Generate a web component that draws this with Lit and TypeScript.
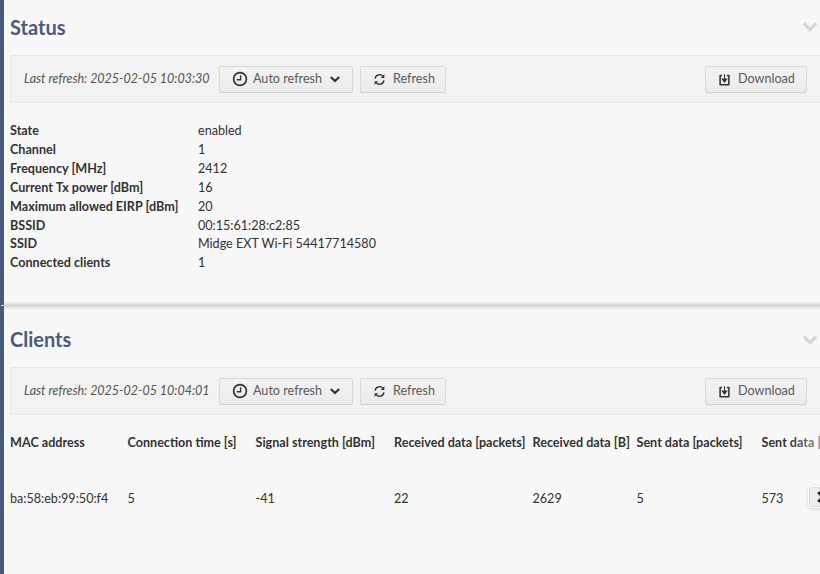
import { LitElement, html, css, svg } from "lit";
import { customElement } from "lit/decorators.js";

const clock = html`<svg class="ic" viewBox="0 0 16 16" width="16" height="16"><circle cx="8" cy="8" r="6.4" fill="none" stroke="#333" stroke-width="1.7"/><path d="M8.6 4.2V8.8H4.8" fill="none" stroke="#333" stroke-width="1.4"/></svg>`;
const refresh = html`<svg class="ic" viewBox="0 0 16 16" width="13" height="13"><path d="M2.6 7A5.5 5.5 0 0 1 12.3 4.2M13.4 9A5.5 5.5 0 0 1 3.7 11.8" fill="none" stroke="#333" stroke-width="1.7"/><path d="M14 1.6V6H9.6ZM2 14.4V10H6.4Z" fill="#333"/></svg>`;
const down = html`<svg class="ic" viewBox="0 0 16 16" width="13" height="13"><path d="M5 3H2.6V14.4H13.4V3H11" fill="none" stroke="#333" stroke-width="1.9" stroke-linejoin="round"/><path d="M8 1.5V8M5.2 7.4H10.8L8 11.2Z" fill="#333" stroke="#333" stroke-width="1.3"/></svg>`;
const chev = svg`<path d="M2 3.5L7 8.5L12 3.5" fill="none" stroke="currentColor" stroke-width="2.6"/>`;

const status = [
  ["State", "enabled"], ["Channel", "1"], ["Frequency [MHz]", "2412"],
  ["Current Tx power [dBm]", "16"], ["Maximum allowed EIRP [dBm]", "20"],
  ["BSSID", "00:15:61:28:c2:85"], ["SSID", "Midge EXT Wi-Fi 54417714580"],
  ["Connected clients", "1"],
];
const heads = ["MAC address", "Connection time [s]", "Signal strength [dBm]", "Received data [packets]", "Received data [B]", "Sent data [packets]", "Sent data [B]"];
const vals = ["ba:58:eb:99:50:f4", "5", "-41", "22", "2629", "5", "573"];

@customElement("app-root")
export class AppRoot extends LitElement {
  static styles = css`
    :host { display: block; width: 820px; height: 574px; overflow: hidden; background: #f8f8f8; font-family: Lato, sans-serif; font-size: 12.6px; color: #333; }
    .page { box-sizing: border-box; height: 574px; border-left: 4px solid #4a5b7c; display: flex; flex-direction: column; }
    .section { padding-left: 6px; display: flex; flex-direction: column; }
    .first { height: 302px; flex: none; }
    .head { box-sizing: border-box; height: 55px; padding-bottom: 2px; display: flex; align-items: center; justify-content: space-between; }
    .second .head { height: 57px; padding-bottom: 0; padding-top: 1px; }
    h2 { margin: 0; font-size: 20px; line-height: 24px; font-weight: 700; color: #4a5b7c; }
    .chev { width: 18px; height: 15px; color: #d6d6d6; margin-right: 1px; }
    .bar { box-sizing: border-box; height: 48px; background: #f2f2f2; border: 1px solid #e8e8e8; border-right: 0; border-radius: 2px 0 0 2px; display: flex; align-items: center; padding: 0 13px 0 13px; }
    .time { font-style: italic; font-size: 12.5px; color: #555; width: 195px; white-space: nowrap; padding-bottom: 1px; }
    button { box-sizing: border-box; height: 27px; font: 12.6px Lato, sans-serif; color: #5a5a5a; background: linear-gradient(#f3f3f3, #ebebeb); border: 1px solid #dadada; border-bottom-color: #cfcfcf; border-radius: 2px; display: flex; align-items: center; padding: 0 0 0 12px; }
    button span { padding-bottom: 2px; }
    .auto { width: 134px; gap: 5px; }
    .ref { width: 86px; margin-left: 7px; gap: 7px; }
    .dl { width: 102px; margin-left: auto; gap: 7px; }
    .small { width: 12px; height: 10px; color: #333; margin-left: 2px; }
    .ic { flex: none; }
    .kv { display: grid; grid-template-columns: 188px 1fr; grid-auto-rows: 18.9px; margin-top: 18.05px; line-height: 19px; }
    .kv b, .tbl b { font-weight: 700; color: #333; white-space: nowrap; }
    .sep { position: relative; height: 8px; flex: none; background: linear-gradient(#f2f2f2, #dedede 30%, #d0d0d0 45%, #e6e6e6 70%, #f8f8f8); }
    .sep::before { content: ""; position: absolute; left: -3px; top: 3px; width: 3px; height: 1px; background: #c8d0dc; }
    .wrap { position: relative; }
    .tbl { display: grid; grid-template-columns: 117.5px 128px 138.5px 138.5px 104px 125px 80px; grid-template-rows: 19px 19px; row-gap: 37px; margin-top: 18px; line-height: 19px; white-space: nowrap; overflow: hidden; width: 810px; }
    .fade { position: absolute; top: 0; right: 0; bottom: 0; width: 32px; background: linear-gradient(90deg, rgba(248,248,248,0), rgba(248,248,248,.45)); }
    .x { position: absolute; right: -10px; top: 72px; box-sizing: border-box; width: 21px; height: 20px; background: #eee; border: 1px solid #ddd; outline: 1px solid #fff; border-radius: 2px; box-shadow: 0 1px 4px rgba(0,0,0,.25); padding: 3px 0 0 7px; }
    .x svg { display: block; }
  `;

  private bar(time: string) {
    return html`<div class="bar">
      <span class="time">Last refresh: ${time}</span>
      <button class="auto">${clock}<span>Auto refresh</span><svg class="small" viewBox="0 0 14 12">${chev}</svg></button>
      <button class="ref">${refresh}<span>Refresh</span></button>
      <button class="dl">${down}<span>Download</span></button>
    </div>`;
  }

  private head(title: string) {
    return html`<div class="head"><h2>${title}</h2><svg class="chev" viewBox="0 0 14 12">${chev}</svg></div>`;
  }

  render() {
    return html`<div class="page">
      <section class="section first">
        ${this.head("Status")}
        ${this.bar("2025-02-05 10:03:30")}
        <div class="kv">${status.map(([k, v]) => html`<b>${k}</b><span>${v}</span>`)}</div>
      </section>
      <div class="sep"></div>
      <section class="section second">
        ${this.head("Clients")}
        ${this.bar("2025-02-05 10:04:01")}
        <div class="wrap">
          <div class="tbl">
            ${heads.map((h) => html`<b>${h}</b>`)}
            ${vals.map((v) => html`<span>${v}</span>`)}
          </div>
          <div class="fade"></div>
          <div class="x"><svg viewBox="0 0 10 10" width="12" height="12"><path d="M1 1L9 9M9 1L1 9" stroke="#222" stroke-width="2.4"/></svg></div>
        </div>
      </section>
    </div>`;
  }
}
